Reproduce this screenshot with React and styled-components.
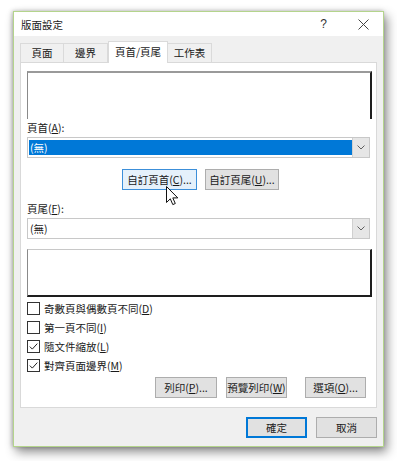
import React from "react";
import styled, { createGlobalStyle, css } from "styled-components";

const Global = createGlobalStyle`
  html, body { margin: 0; padding: 0; background: #ffffff; }
  body {
    font-family: "Noto Sans CJK TC", "Noto Sans", "Liberation Sans", sans-serif;
    font-size: 10.5px;
    color: #1a1a1a;
  }
`;

const Page = styled.div`
  width: 397px;
  height: 461px;
  padding: 11px 0 0 13px;
  box-sizing: border-box;
  background: #ffffff;
`;

const Dialog = styled.div`
  width: 371px;
  height: 436px;
  box-sizing: border-box;
  border: 1px solid #b4d48c;
  background: #f0f0f0;
  display: flex;
  flex-direction: column;
  box-shadow: 3px 5px 10px rgba(0, 0, 0, 0.45), -1px 0 4px rgba(0, 0, 0, 0.25);
`;

const TitleBar = styled.div`
  height: 24px;
  background: #ffffff;
  display: flex;
  align-items: center;
  padding: 0 14px 0 7px;
`;

const Title = styled.div`
  flex: 1;
  font-size: 10.5px;
  color: #1a1a1a;
`;

const Help = styled.div`
  font-family: "Liberation Sans", sans-serif;
  font-size: 12px;
  color: #333;
  margin-right: 31px;
`;

const Body = styled.div`
  flex: 1;
  display: flex;
  flex-direction: column;
  padding: 5px 6px 7px 6px;
`;

const TabRow = styled.div`
  display: flex;
  align-items: flex-end;
  height: 21px;
`;

const Tab = styled.div`
  width: ${(p) => p.$w}px;
  box-sizing: border-box;
  height: 19px;
  line-height: 18px;
  text-align: center;
  border: 1px solid #dadada;
  border-bottom: none;
  border-left-width: ${(p) => (p.$first ? 1 : 0)}px;
  background: #f0f0f0;
  white-space: nowrap;
  ${(p) =>
    p.$active &&
    css`
      height: 22px;
      line-height: 20px;
      margin-bottom: -1px;
      background: #ffffff;
      border-left-width: 1px;
      position: relative;
      z-index: 1;
    `}
`;

const Panel = styled.div`
  background: #ffffff;
  border: 1px solid #d9d9d9;
  padding: 8px 4px 9px 6px;
  display: flex;
  flex-direction: column;
`;

const Preview = styled.div`
  height: 48px;
  margin-top: ${(p) => p.$mt || 0}px;
  box-sizing: border-box;
  background: #ffffff;
  ${(p) =>
    p.$footer
      ? css`
          border-top: 1px solid #c8c8c8;
          border-left: 1px solid #8a8a8a;
          border-right: 2px solid #1e1e1e;
          border-bottom: 2px solid #1e1e1e;
        `
      : css`
          border-top: 2px solid #9a9a9a;
          border-left: 1px solid #8a8a8a;
          border-right: 2px solid #1e1e1e;
        `}
`;

const Label = styled.div`
  height: 18px;
  line-height: 18px;
  margin-top: ${(p) => p.$mt || 0}px;
`;

const Select = styled.div`
  height: 21px;
  margin-right: 2px;
  box-sizing: border-box;
  border: 1px solid #c8c8c8;
  background: #ffffff;
  display: flex;
  align-items: stretch;
  padding: ${(p) => (p.$focused ? "2px 0 2px 1px" : "0")};
`;

const SelectValue = styled.div`
  flex: 1;
  line-height: ${(p) => (p.$focused ? 15 : 19)}px;
  padding-left: ${(p) => (p.$focused ? 1 : 2)}px;
  background: ${(p) => (p.$focused ? "#0078d7" : "#ffffff")};
  color: ${(p) => (p.$focused ? "#ffffff" : "#1a1a1a")};
`;

const DropBtn = styled.div`
  width: 16px;
  margin: ${(p) => (p.$focused ? "-2px 0" : "0")};
  background: #e6e6e6;
  border-left: 1px solid #d0d0d0;
  display: flex;
  align-items: center;
  justify-content: center;
`;

const CenterRow = styled.div`
  margin-top: 11px;
  display: flex;
  justify-content: center;
  gap: 8px;
  padding-left: 2px;
`;

const RightRow = styled.div`
  margin-top: ${(p) => p.$mt || 0}px;
  display: flex;
  justify-content: flex-end;
  padding-right: ${(p) => p.$pr || 0}px;
`;

const Button = styled.div`
  position: relative;
  width: ${(p) => p.$w}px;
  height: 21px;
  box-sizing: border-box;
  margin-left: ${(p) => p.$ml || 0}px;
  border: 1px solid #adadad;
  background: #e1e1e1;
  text-align: center;
  line-height: 19px;
  white-space: nowrap;
  color: #1a1a1a;
  ${(p) =>
    p.$hover &&
    css`
      background: #e5f1fb;
      border-color: #3c8fd9;
    `}
  ${(p) =>
    p.$default &&
    css`
      border: 1px solid #0078d7;
      box-shadow: inset 0 0 0 1px #0078d7;
    `}
`;

const Cursor = styled.svg`
  position: absolute;
  left: 43px;
  top: 16px;
  z-index: 2;
`;

const Checks = styled.div`
  margin-top: 2px;
  display: flex;
  flex-direction: column;
`;

const CheckRow = styled.div`
  height: 19px;
  display: flex;
  align-items: center;
  gap: 4px;
  white-space: nowrap;
`;

const Box = styled.div`
  width: 13px;
  height: 13px;
  box-sizing: border-box;
  border: 1px solid #333333;
  background: #ffffff;
  display: flex;
  align-items: center;
  justify-content: center;
`;

const Footer = styled.div`
  margin-top: 9px;
  display: flex;
  justify-content: flex-end;
`;

const Chevron = () => (
  <svg width="8" height="5" viewBox="0 0 8 5">
    <path d="M0.5 0.5 L4 4 L7.5 0.5" fill="none" stroke="#606060" strokeWidth="1" />
  </svg>
);

const Check = ({ checked, children }) => (
  <CheckRow>
    <Box>
      {checked && (
        <svg width="11" height="11" viewBox="0 0 11 11">
          <path d="M1.8 5.6 L4.3 8.1 L9.3 2.6" fill="none" stroke="#222" strokeWidth="1" />
        </svg>
      )}
    </Box>
    <span>{children}</span>
  </CheckRow>
);

export default function App() {
  return (
    <>
      <Global />
      <Page>
        <Dialog>
          <TitleBar>
            <Title>版面設定</Title>
            <Help>?</Help>
            <svg width="11" height="11" viewBox="0 0 11 11">
              <path d="M0.5 0.5 L10.5 10.5 M10.5 0.5 L0.5 10.5" stroke="#444" strokeWidth="1" />
            </svg>
          </TitleBar>
          <Body>
            <TabRow>
              <Tab $w={44} $first>頁面</Tab>
              <Tab $w={44}>邊界</Tab>
              <Tab $w={60} $active>頁首/頁尾</Tab>
              <Tab $w={44}>工作表</Tab>
            </TabRow>
            <Panel>
              <Preview />
              <Label>
                頁首(<u>A</u>):
              </Label>
              <Select $focused>
                <SelectValue $focused>(無)</SelectValue>
                <DropBtn $focused>
                  <Chevron />
                </DropBtn>
              </Select>
              <CenterRow>
                <Button $w={75} $hover>
                  自訂頁首(<u>C</u>)...
                  <Cursor width="13" height="20" viewBox="0 0 13 20">
                    <path
                      d="M0.5 0.5 L0.5 16.5 L4.3 12.8 L6.8 18.6 L9.3 17.5 L6.8 11.9 L11.8 11.9 Z"
                      fill="#ffffff"
                      stroke="#111"
                      strokeWidth="1"
                      strokeLinejoin="round"
                    />
                  </Cursor>
                </Button>
                <Button $w={74}>
                  自訂頁尾(<u>U</u>)...
                </Button>
              </CenterRow>
              <Label $mt={10}>
                頁尾(<u>F</u>):
              </Label>
              <Select>
                <SelectValue>(無)</SelectValue>
                <DropBtn>
                  <Chevron />
                </DropBtn>
              </Select>
              <Preview $footer $mt={10} />
              <Checks>
                <Check>
                  奇數頁與偶數頁不同(<u>D</u>)
                </Check>
                <Check>
                  第一頁不同(<u>I</u>)
                </Check>
                <Check checked>
                  隨文件縮放(<u>L</u>)
                </Check>
                <Check checked>
                  對齊頁面邊界(<u>M</u>)
                </Check>
              </Checks>
              <RightRow $mt={2} $pr={6}>
                <Button $w={62}>
                  列印(<u>P</u>)...
                </Button>
                <Button $w={61} $ml={9}>
                  預覽列印(<u>W</u>)
                </Button>
                <Button $w={61} $ml={18}>
                  選項(<u>O</u>)...
                </Button>
              </RightRow>
            </Panel>
            <Footer>
              <Button $w={61} $default>確定</Button>
              <Button $w={61} $ml={9}>取消</Button>
            </Footer>
          </Body>
        </Dialog>
      </Page>
    </>
  );
}
